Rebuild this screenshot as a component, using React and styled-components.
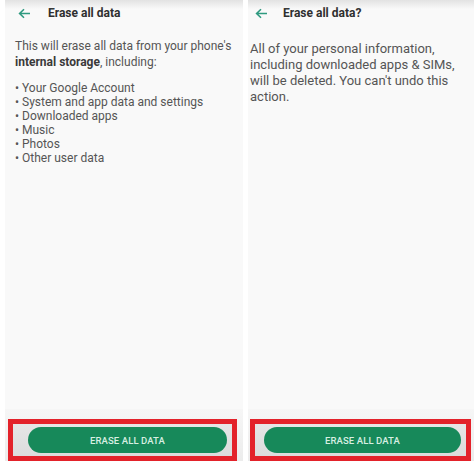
import React from 'react'
import styled, { createGlobalStyle } from 'styled-components'

const Global = createGlobalStyle`
  html, body { margin: 0; padding: 0; background: #fff; }
  body { font-family: Roboto, "Noto Sans", sans-serif; }
`

const Page = styled.div`
  width: 474px;
  height: 470px;
  display: flex;
  gap: 5px;
  padding-left: 5px;
  box-sizing: border-box;
  overflow: hidden;
`

const Panel = styled.div`
  width: ${p => p.w}px;
  height: 461px;
  background: #f9f9f9;
  display: flex;
  flex-direction: column;
  position: relative;
  &::before {
    content: '';
    position: absolute;
    left: 0; right: 0; top: 0;
    height: 9px;
    background: linear-gradient(#e2e2e2, rgba(249,249,249,0));
  }
`

const Header = styled.div`
  height: 26px;
  display: flex;
  align-items: center;
  padding-left: ${p => p.pl}px;
  gap: ${p => p.gap}px;
`

const Title = styled.div`
  font-size: 12px;
  font-weight: 700;
  color: #2f2f2f;
`

const Body = styled.div`
  flex: 1;
  padding: ${p => p.pad};
  color: #555;
  font-size: ${p => p.fs}px;
  line-height: ${p => p.lh}px;
`

const Para = styled.p`
  margin: 0 0 ${p => p.mb || 0}px;
  b { color: #3a3a3a; }
`

const List = styled.ul`
  margin: 0;
  padding: 0;
  list-style: none;
  li { line-height: 14px; }
  li::before { content: '• '; }
`

const Footer = styled.div`
  padding: 10px ${p => p.pr}px 0 ${p => p.pl}px;
  background: linear-gradient(#f6f6f6, #ececec);
`

const RedBox = styled.div`
  border: 5px solid #e3222a;
  height: 32px;
  background: linear-gradient(#e6e6e6, #dcdcdc);
  display: flex;
  align-items: center;
  padding: 0 5px 0 ${p => p.inset}px;
`

const Button = styled.button`
  flex: 1;
  height: 26px;
  border: none;
  border-radius: 13px;
  background: #17895a;
  color: #d8efe2;
  font-family: Roboto, sans-serif;
  font-size: 9.5px;
  font-weight: 500;
  letter-spacing: 0.1px;
`

const Arrow = () => (
  <svg width="13" height="11" viewBox="0 0 13 11">
    <path d="M12 5.5H2M6 1.2L1.6 5.5 6 9.8" fill="none" stroke="#2f9a80" strokeWidth="1.6" />
  </svg>
)

export default function App() {
  return (
    <>
      <Global />
      <Page>
        <Panel w={238}>
          <Header pl={13} gap={17}>
            <Arrow />
            <Title>Erase all data</Title>
          </Header>
          <Body pad="12px 10px 0 10px" fs={12} lh={16}>
            <Para mb={11}>This will erase all data from your phone's <b>internal storage</b>, including:</Para>
            <List>
              <li>Your Google Account</li>
              <li>System and app data and settings</li>
              <li>Downloaded apps</li>
              <li>Music</li>
              <li>Photos</li>
              <li>Other user data</li>
            </List>
          </Body>
          <Footer pl={3} pr={6}>
            <RedBox inset={15}>
              <Button>ERASE ALL DATA</Button>
            </RedBox>
          </Footer>
        </Panel>
        <Panel w={226}>
          <Header pl={7} gap={15}>
            <Arrow />
            <Title>Erase all data?</Title>
          </Header>
          <Body pad="15px 12px 0 2px" fs={13} lh={16}>
            <Para>All of your personal information, including downloaded apps &amp; SIMs, will be deleted. You can't undo this action.</Para>
          </Body>
          <Footer pl={2} pr={3}>
            <RedBox inset={9}>
              <Button>ERASE ALL DATA</Button>
            </RedBox>
          </Footer>
        </Panel>
      </Page>
    </>
  )
}
